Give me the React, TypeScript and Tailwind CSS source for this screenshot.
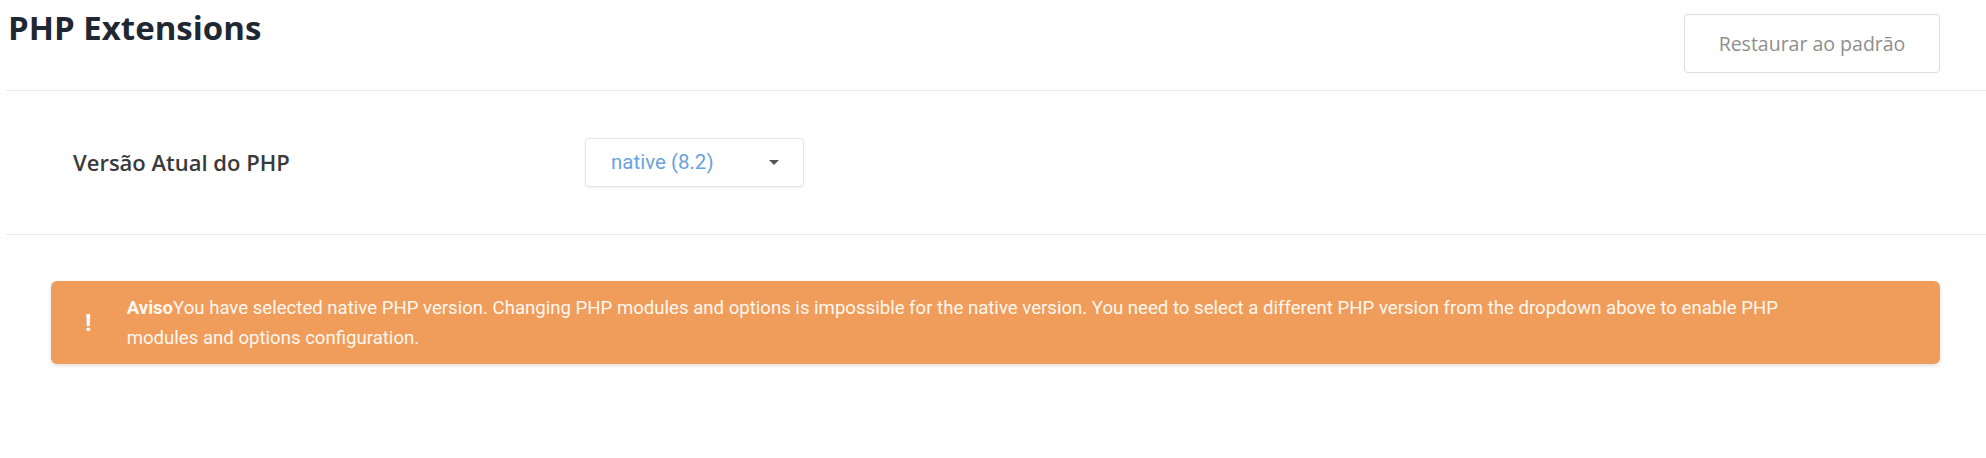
import { useState } from "react"

const openSans = "font-['Open_Sans','Noto_Sans',sans-serif]"
const roboto = "font-['Roboto','Liberation_Sans',sans-serif]"

export default function App() {
    const [version] = useState('native (8.2)')

    return (
        <div className="w-[1986px] h-[458px] bg-white pl-[5px]">
            {/* Header */}
            <div className="flex items-start justify-between h-[91px] border-b border-[#ececec]">
                <h1 className={`${openSans} ml-[3px] mt-[6px] text-[33px] leading-[44px] font-bold text-[#1f2733]`}>PHP Extensions</h1>
                <button className={`${openSans} mt-[14px] mr-[46px] w-[256px] h-[59px] border border-[#dcdcdc] rounded-[4px] bg-white text-[19.5px] text-[#8e8e8e]`}>
                    Restaurar ao padrão
                </button>
            </div>

            {/* PHP version */}
            <div className="flex items-center h-[144px] border-b border-[#ececec]">
                <span className={`${openSans} ml-[68px] w-[512px] text-[22px] font-semibold text-[#3a3a3a]`}>Versão Atual do PHP</span>
                <div className="flex items-center justify-between w-[219px] h-[49px] pl-[25px] pr-[24px] border border-[#e6e6e6] rounded-[4px] bg-white shadow-[0_1px_3px_rgba(0,0,0,0.06)]">
                    <span className={`${roboto} text-[20.5px] text-[#6aa3dc]`}>{version}</span>
                    <span className="w-0 h-0 border-l-[5px] border-r-[5px] border-t-[5px] border-l-transparent border-r-transparent border-t-[#555]" />
                </div>
            </div>

            {/* Warning */}
            <div className="pt-[46px] pl-[46px] pr-[46px]">
                <div className="flex items-center h-[83px] pl-[33px] pr-[120px] rounded-[6px] bg-[#f09d5c] shadow-[0_2px_4px_rgba(0,0,0,0.12)]">
                    <span className={`${roboto} w-[10px] text-center text-[24px] font-bold text-white`}>!</span>
                    <p className={`${roboto} ml-[34px] text-[18.6px] leading-[30px] text-[#fff7ef]`}>
                        <b className="font-bold">Aviso</b>You have selected native PHP version. Changing PHP modules and options is impossible for the native version. You need to select a different PHP version from the dropdown above to enable PHP modules and options configuration.
                    </p>
                </div>
            </div>
        </div>
    )
}
